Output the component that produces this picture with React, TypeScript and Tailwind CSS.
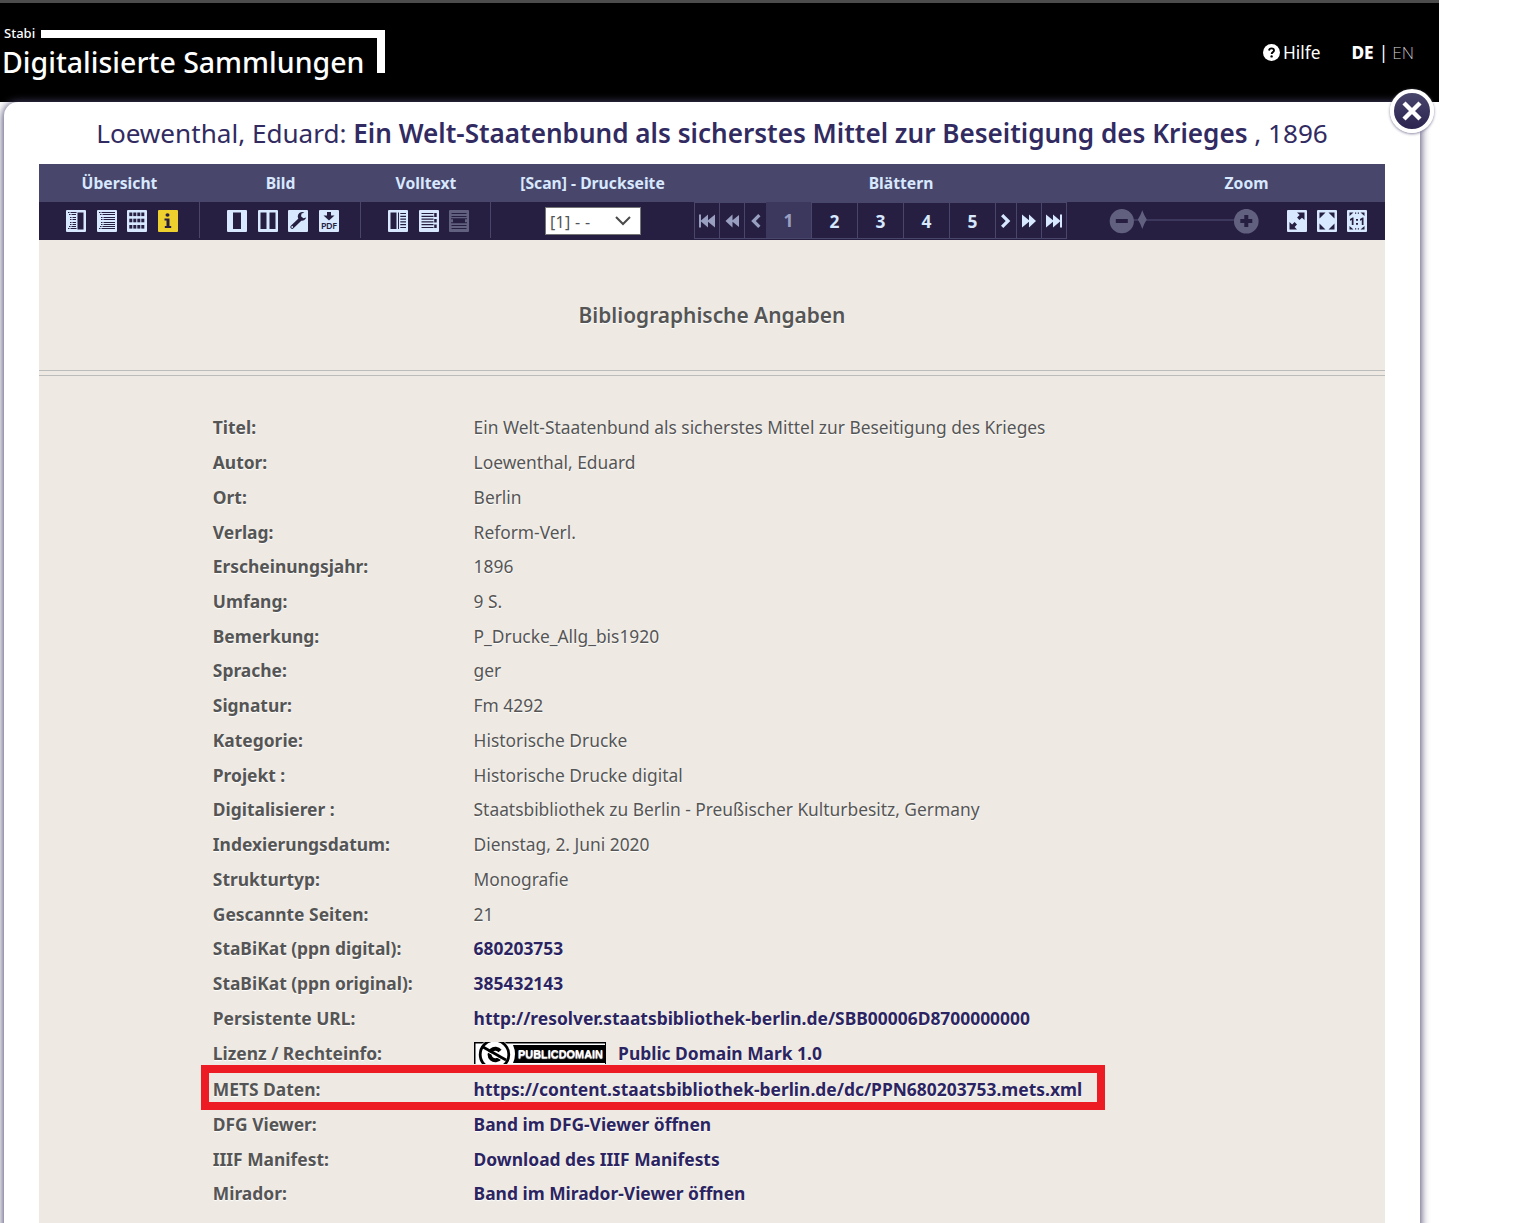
import type { ReactNode } from "react";

type Row = { label: string; value?: string; link?: boolean; badge?: boolean };

const rows: Row[] = [
  { label: "Titel:", value: "Ein Welt-Staatenbund als sicherstes Mittel zur Beseitigung des Krieges" },
  { label: "Autor:", value: "Loewenthal, Eduard" },
  { label: "Ort:", value: "Berlin" },
  { label: "Verlag:", value: "Reform-Verl." },
  { label: "Erscheinungsjahr:", value: "1896" },
  { label: "Umfang:", value: "9 S." },
  { label: "Bemerkung:", value: "P_Drucke_Allg_bis1920" },
  { label: "Sprache:", value: "ger" },
  { label: "Signatur:", value: "Fm 4292" },
  { label: "Kategorie:", value: "Historische Drucke" },
  { label: "Projekt :", value: "Historische Drucke digital" },
  { label: "Digitalisierer :", value: "Staatsbibliothek zu Berlin - Preußischer Kulturbesitz, Germany" },
  { label: "Indexierungsdatum:", value: "Dienstag, 2. Juni 2020" },
  { label: "Strukturtyp:", value: "Monografie" },
  { label: "Gescannte Seiten:", value: "21" },
  { label: "StaBiKat (ppn digital):", value: "680203753", link: true },
  { label: "StaBiKat (ppn original):", value: "385432143", link: true },
  { label: "Persistente URL:", value: "http://resolver.staatsbibliothek-berlin.de/SBB00006D8700000000", link: true },
  { label: "Lizenz / Rechteinfo:", value: "Public Domain Mark 1.0", link: true, badge: true },
  { label: "METS Daten:", value: "https://content.staatsbibliothek-berlin.de/dc/PPN680203753.mets.xml", link: true },
  { label: "DFG Viewer:", value: "Band im DFG-Viewer öffnen", link: true },
  { label: "IIIF Manifest:", value: "Download des IIIF Manifests", link: true },
  { label: "Mirador:", value: "Band im Mirador-Viewer öffnen", link: true },
];

const D = "#261f42";

function Tile({ children, fill = "#d7e8ff" }: { children: ReactNode; fill?: string }) {
  return (
    <svg width="20" height="22" viewBox="0 0 20 22" className="block shrink-0">
      <rect width="20" height="22" rx="1" fill={fill} />
      {children}
    </svg>
  );
}

const IconTocSplit = () => (
  <Tile>
    <path d="M11.500 2.500h6v17h-6z" fill={D} />
    <path d="M2 2.500h1.500M4.500 2.500h6M3 4.500h1.500M5.500 4.500h4.500M4 7.500h1.500M6.500 7.500h3.500M4 9.500h1.500M6.500 9.500h3.500M4 12.500h1.500M6.500 12.500h3.500M4 14.500h1.500M6.500 14.500h3.500M3 16.500h1.500M5.500 16.500h4.500M2 18.500h1.500M4.500 18.500h6" stroke={D} strokeWidth="1" />
  </Tile>
);
const IconToc = () => (
  <Tile>
    <path d="M2 2.500h1.500M4.500 2.500h13.500M3 4.500h1.500M5.500 4.500h12.500M4 7.500h1.500M6.500 7.500h11.500M4 9.500h1.500M6.500 9.500h11.500M4 12.500h1.500M6.500 12.500h11.500M4 14.500h1.500M6.500 14.500h11.500M3 16.500h1.500M5.500 16.500h12.500M2 18.500h1.500M4.500 18.500h13.500" stroke={D} strokeWidth="1" />
  </Tile>
);
const IconGrid = () => (
  <Tile>
    {[2.5, 8.7, 15].map((y) =>
      [2.3, 6.300, 10.300, 14.300].map((x) => <rect key={`${x}-${y}`} x={x} y={y} width="3" height="3.600" fill={D} />)
    )}
  </Tile>
);
const IconInfo = () => (
  <Tile fill="#edcf2e">
    <ellipse cx="9.500" cy="5" rx="2" ry="1.800" fill={D} />
    <path d="M6.500 8.500h5v7.500h1.700v2H6.800v-2h1.700v-5.500H6.500z" fill={D} />
  </Tile>
);
const IconSingle = () => (
  <Tile>
    <path d="M6 2.500h8v16.500H6z" fill={D} />
  </Tile>
);
const IconDouble = () => (
  <Tile>
    <path d="M2.500 2.500h6v16.500h-6zM11.500 2.500h6v16.500h-6z" fill={D} />
  </Tile>
);
const IconWrench = () => (
  <Tile>
    <path d="M4.200 17 11.500 10" stroke={D} strokeWidth="3.800" strokeLinecap="round" />
    <path d="M16.400 2.800A4.300 4.300 0 1 0 18.200 7.500L15.300 8.300 13 6.200 13.600 3.500z" fill={D} />
    <circle cx="4.200" cy="17" r="0.900" fill="#d7e8ff" />
  </Tile>
);
const IconPdf = () => (
  <Tile>
    <path d="M8 2h4v3.500h3.500L10 10.500 4.500 5.500H8z" fill={D} />
    <text x="10" y="18.800" fontSize="9" fontWeight="600" textAnchor="middle" textLength="16" fill={D} fontFamily="Noto Sans, sans-serif">PDF</text>
  </Tile>
);
const IconTextSide = () => (
  <Tile>
    <path d="M2.500 2.500h6v16.500h-6z" fill={D} />
    <path d="M10.500 2.500V19" stroke={D} />
    <path d="M12.300 3.500H18M12.300 6.300H18M12.300 9.100H18M12.300 11.900H18M12.300 14.700H18M12.300 17.500H18" stroke={D} strokeWidth="1.200" />
  </Tile>
);
const IconTextLines = () => (
  <Tile>
    <path d="M2.500 3.500h12M2.500 6.300h12M2.500 9.100h12M2.500 11.900h12M2.500 14.700h12M2.500 17.500h12" stroke={D} strokeWidth="1.200" />
    <path d="M15.200 3h2.500v4h-2.500zM15.200 9h2.500v3.500h-2.500zM15.200 14.500h2.500V18h-2.500z" fill={D} />
  </Tile>
);
const IconTextOff = () => (
  <Tile fill="#62607f">
    <path d="M2.500 3.500h15M2.500 6.500h15M2.500 15.500h15M2.500 18.500h15" stroke={D} strokeWidth="1" />
    <path d="M2 8.200h16v1h-2v3h2v1H2v-1h2v-3H2z" fill={D} />
  </Tile>
);
const IconExpand = () => (
  <Tile>
    <path d="M10 2.500h7.500V10l-2.500-2.300-2.600 2.300-2.300-2.400 2.600-2.500zM2.500 12v7.500h7.500l-2.400-2.600 2.400-2.400-2.400-2.400-2.500 2.400z" fill={D} />
  </Tile>
);
const IconFit = () => (
  <Tile>
    <path d="M2.500 2.500h6l-6 6zM17.500 2.500v6l-6-6zM2.500 19.500v-6l6 6zM17.500 19.500h-6l6-6z" fill={D} />
  </Tile>
);
const IconActual = () => (
  <Tile>
    <path d="M2.500 6V2.500h4zM17.500 6V2.500h-4zM2.500 16v3.500h4zM17.500 16v3.500h-4zM8 2.500h1.200v1.200H8zM10.800 2.500h1.200v1.200h-1.200zM8 18.300h1.200v1.200H8zM10.800 18.300h1.200v1.200h-1.200z" fill={D} />
    <path d="M3 9l2.500-1.500H6.500V15H4.800V10L3 10.700zM13 9l2.500-1.500H16.500V15h-1.700V10L13 10.700zM9 9h2v1.800H9zM9 13h2v1.800H9z" fill={D} />
  </Tile>
);

function Group({ title, className, children }: { title: string; className: string; children: ReactNode }) {
  return (
    <div className={`flex shrink-0 flex-col ${className}`}>
      <div className="flex h-[38px] items-center justify-center bg-[#49466c] pt-[2px] text-[15.7px] font-bold text-[#d7e8ff]">
        {title}
      </div>
      <div className="flex h-[38px] bg-[#261f42]">{children}</div>
    </div>
  );
}

const glyphs: Record<string, string> = {
  first: "M0 .5h2v6L9 .5v5.800L16 .5v13L9 7.700v5.800L2 7.500v6H0z",
  rewind: "M7.500.5v5.800L14.500.5v13L7.500 7.700v5.800L.5 7z",
  prev: "M7.200 0 9.500 2.300 4.800 7l4.700 4.700L7.200 14 .2 7z",
  next: "M2.300 0 0 2.300 4.700 7 0 11.700 2.300 14l7-7z",
  forward: "M0 .5v13L7 7.700v5.800L14 7 7 .5v5.800z",
  last: "M0 .5v13L7 7.700v5.800l7-6v6h2V.5h-2v6L7 .5v5.800z",
};

function Step({ name, w, box, dim }: { name: string; w: string; box: string; dim?: boolean }) {
  return (
    <div className={`flex h-[37px] shrink-0 items-center justify-center border-y border-l border-[#49466c] pt-px ${w}`}>
      <svg width={box.split(" ")[2]} height="14" viewBox={box} fill={dim ? "#999fc0" : "#d7e8ff"} className="block">
        <path d={glyphs[name]} />
      </svg>
    </div>
  );
}

function PublicDomainBadge() {
  return (
    <svg width="132" height="24" viewBox="0 0 132 24" className="block">
      <rect width="132" height="24" fill="#000" />
      <rect x="1.500" y="1.500" width="129.500" height="22.500" fill="#fff" />
      <path d="M39 3h92v18H39Q43 12 39 3z" fill="#000" />
      <circle cx="20.500" cy="12.500" r="16.200" fill="#fff" />
      <circle cx="20.500" cy="12.500" r="14.300" fill="none" stroke="#000" strokeWidth="2.800" />
      <path d="M26 9A5.800 5.800 0 1 0 26 16" fill="none" stroke="#000" strokeWidth="4" />
      <path d="M9.500 7.500 30 19" stroke="#fff" strokeWidth="1.200" />
      <path d="M9 5 32 18" stroke="#000" strokeWidth="2.600" />
      <text x="44" y="16.300" textLength="85" lengthAdjust="spacingAndGlyphs" fontSize="10.600" fontWeight="700" fill="#fff" fontFamily="Liberation Sans, sans-serif">PUBLICDOMAIN</text>
    </svg>
  );
}

export default function App() {
  return (
    <div className="relative h-[1223px] w-[1536px] overflow-hidden bg-white font-['Noto_Sans',sans-serif]">
      <header className="flex h-[102px] w-[1439px] justify-between border-t-[3px] border-[#4c4c4c] bg-black text-white">
        <div className="relative h-full w-[385px]">
          <div className="flex pl-[4px] pt-[22px] text-[13px] leading-[16px] font-medium">
            <span className="whitespace-nowrap">Stabi</span>
          </div>
          <div className="absolute left-[41px] top-[27px] h-[43px] w-[344px] border-r-8 border-t-8 border-white" />
          <div className="pl-[2px] pt-[2px] text-[28.5px] leading-[38px] font-medium whitespace-nowrap">
            Digitalisierte Sammlungen
          </div>
        </div>
        <div className="flex h-[99px] items-center pr-[25px] text-[17.3px]">
          <svg width="17" height="17" viewBox="0 0 17 17" className="mr-[3px] block">
            <circle cx="8.500" cy="8.500" r="8.500" fill="#fff" />
            <path d="M6 6.500c.2-1.500 1.200-2.100 2.500-2.100 1.600 0 2.500.9 2.500 2.100 0 1.700-2.300 1.600-2.300 3.400" fill="none" stroke="#000" strokeWidth="1.900" />
            <circle cx="8.600" cy="12.400" r="1.200" fill="#000" />
          </svg>
          <span className="mr-[31px]">Hilfe</span>
          <span className="font-extrabold">DE</span>
          <span className="ml-[5px] mr-[4px]">|</span>
          <span className="font-extralight text-[#dddddd]">EN</span>
        </div>
      </header>

      <main className="ml-[4px] h-[1160px] w-[1416px] rounded-[14px] bg-white px-[35px] shadow-[0_1px_9px_1px_#49466c]">
        <h1 className="flex h-[62px] items-center justify-center pt-[2px] text-[26.100px] whitespace-pre text-[#312b61]">
          Loewenthal, Eduard: <span className="font-semibold">Ein Welt-Staatenbund als sicherstes Mittel zur Beseitigung des Krieges</span> , 1896
        </h1>

        <div className="flex w-[1346px]">
          <Group title="Übersicht" className="w-[161px]">
            <div className="mb-[2px] flex w-full items-start gap-[10.7px] border-r border-[#49466c] pl-[27px] pt-[8px]">
              <IconTocSplit /><IconToc /><IconGrid /><IconInfo />
            </div>
          </Group>
          <Group title="Bild" className="w-[161px]">
            <div className="mb-[2px] flex w-full items-start gap-[10.7px] border-r border-[#49466c] pl-[27px] pt-[8px]">
              <IconSingle /><IconDouble /><IconWrench /><IconPdf />
            </div>
          </Group>
          <Group title="Volltext" className="w-[130px]">
            <div className="mb-[2px] flex w-full items-start gap-[10.500px] border-r border-[#49466c] pl-[27px] pt-[8px]">
              <IconTextSide /><IconTextLines /><IconTextOff />
            </div>
          </Group>
          <Group title="[Scan] - Druckseite" className="w-[203px]">
            <div className="ml-[54px] mt-[5px] flex h-[28px] w-[96px] items-center justify-between border border-[#767676] bg-white pl-[4px] pr-[9px] text-[16px] text-[#555]">
              <span className="pt-[2px] tracking-[0.3px] whitespace-nowrap">[1] - -</span>
              <svg width="16" height="10" viewBox="0 0 16 10" fill="none" stroke="#4a4a4a" strokeWidth="2">
                <path d="m1 1 7 7 7-7" />
              </svg>
            </div>
          </Group>
          <Group title="Blättern" className="w-[414px]">
            <Step name="first" w="w-[25px]" box="0 0 16 14" dim />
            <Step name="rewind" w="w-[25px]" box="0 0 14 14" dim />
            <Step name="prev" w="w-[22px]" box="0 0 10 14" dim />
            {["1", "2", "3", "4", "5"].map((n) => (
              <div
                key={n}
                className={`flex h-[37px] shrink-0 items-center justify-center border-b border-[#49466c] pt-px text-[17.4px] font-bold ${
                  n === "1" ? "w-[45px] bg-[#3c375d] text-[#999fc0]" : "w-[46px] border-l border-t text-[#d7e8ff]"
                }`}
              >
                {n}
              </div>
            ))}
            <Step name="next" w="w-[21px]" box="0 0 10 14" />
            <Step name="forward" w="w-[25px]" box="0 0 14 14" />
            <Step name="last" w="w-[26px] border-r" box="0 0 16 14" />
          </Group>
          <Group title="Zoom" className="w-[277px]">
            <div className="flex w-full items-start pl-px pt-[7px]">
              <svg width="150" height="25" viewBox="0 0 150 25" className="mr-[28px] block shrink-0">
                <path d="M20 11h110" stroke="#3c375d" strokeWidth="2" />
                <circle cx="12.800" cy="12.200" r="12.100" fill="#62607f" />
                <circle cx="137.300" cy="12.200" r="12.300" fill="#62607f" />
                <path d="M33.300 1.200q1.800 5.300 4.500 9.300-2.700 4-4.500 9.500-1.800-5.500-4.500-9.500 2.700-4 4.500-9.300" fill="#62607f" />
                <path d="M6.800 10h12v4h-12zM131.300 10h4V6h4v4h4v4h-4v4h-4v-4h-4z" fill={D} />
              </svg>
              <div className="flex gap-[10px] pt-px">
                <IconExpand /><IconFit /><IconActual />
              </div>
            </div>
          </Group>
        </div>

        <section className="h-[1000px] w-[1346px] bg-[#eeeae3] text-[#555] [text-shadow:0_1px_1px_#fff]">
          <h2 className="flex h-[130px] items-center justify-center pt-[22px] text-[20.900px] font-semibold">Bibliographische Angaben</h2>
          <div className="h-[6px] border-y border-[#babdbb]" />
          <dl className="pl-[173.800px] pt-[34px] text-[17.380px]">
            {rows.map((r) => (
              <div key={r.label} className={`flex items-center whitespace-nowrap ${r.badge ? "mb-[2px] h-[34.740px]" : "h-[34.740px]"}`}>
                <dt className="w-[260.800px] text-[17.420px] font-bold">{r.label}</dt>
                <dd className={r.link ? "flex items-center text-[17.420px] font-bold text-[#2b2461]" : ""}>
                  {r.badge && (
                    <span className="mr-[12.500px] block h-[23px] overflow-hidden pt-px">
                      <PublicDomainBadge />
                    </span>
                  )}
                  {r.value}
                </dd>
              </div>
            ))}
          </dl>
        </section>
      </main>

      <button className="absolute left-[1390px] top-[89px] flex size-[44px] items-center justify-center rounded-full border-[4px] border-white bg-linear-to-b from-[#49466c] to-[#2b2450] shadow-[0_1px_3px_#8885a0]" aria-label="Schließen">
        <svg width="20" height="20" viewBox="0 0 20 20" stroke="#fff" strokeWidth="4.400">
          <path d="m2 2 16 16M18 2 2 18" />
        </svg>
      </button>
      <div className="absolute left-[201px] top-[1065px] h-[45px] w-[904px] border-8 border-[#ed1c24]" />
    </div>
  );
}
